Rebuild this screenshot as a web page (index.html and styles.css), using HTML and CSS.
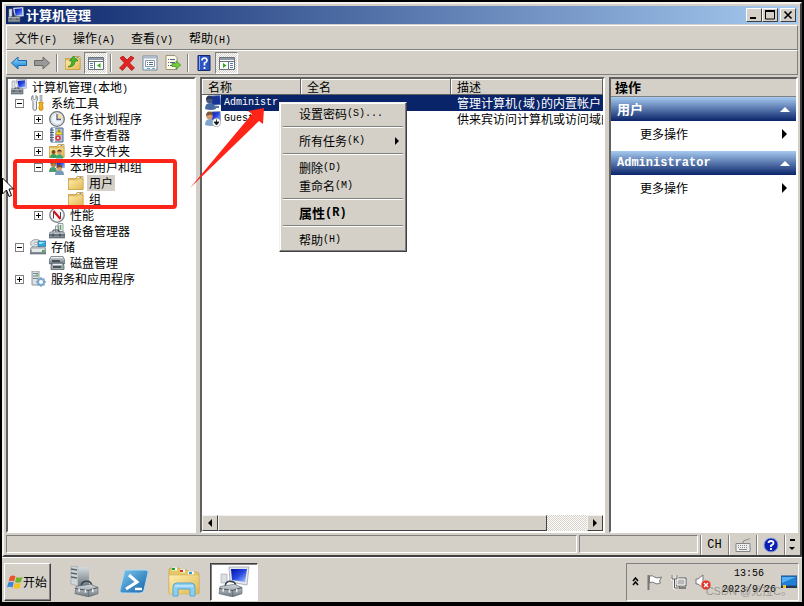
FILE: index.html
```
<!DOCTYPE html>
<html lang="zh-CN">
<head>
    <meta charset="UTF-8">
    <meta name="viewport" content="width=device-width, initial-scale=1.0">
    <title>计算机管理</title>
    <link rel="stylesheet" href="styles.css">
</head>
<body>

    <!-- Shared icons -->
    <svg class="icon-defs" aria-hidden="true">
        <defs>
            <linearGradient id="g-metal" x1="0" y1="0" x2="0" y2="1"><stop offset="0" stop-color="#d5dadd"/><stop offset="1" stop-color="#6d7880"/></linearGradient>
            <linearGradient id="g-screen" x1="0" y1="0" x2="1" y2="1"><stop offset="0" stop-color="#0010a8"/><stop offset=".5" stop-color="#2848e0"/><stop offset="1" stop-color="#a8c8ff"/></linearGradient>
            <linearGradient id="g-folder" x1="0" y1="0" x2="1" y2="1"><stop offset="0" stop-color="#fdeeb0"/><stop offset="1" stop-color="#e3b84e"/></linearGradient>
            <linearGradient id="g-blue" x1="0" y1="0" x2="0" y2="1"><stop offset="0" stop-color="#8fd8ff"/><stop offset="1" stop-color="#1880d0"/></linearGradient>
            <linearGradient id="g-ps" x1="0" y1="0" x2="1" y2="1"><stop offset="0" stop-color="#7cc8ee"/><stop offset="1" stop-color="#1260a8"/></linearGradient>
        </defs>
        <symbol id="i-computer" viewBox="0 0 16 16">
            <path d="M5 1l10-1 1 9-9 1z" fill="#e8ecf0" stroke="#889" stroke-width=".6"/>
            <path d="M6.500 2l7.500-.7.7 6.700-7 .8z" fill="url(#g-screen)"/>
            <path d="M1 2h3v8H1z" fill="#dfe3e6" stroke="#8a9299" stroke-width=".6"/>
            <path d="M4 10V9h4v1" fill="none" stroke="#445"/>
            <path d="M0 10h12v5H0z" fill="url(#g-metal)" stroke="#5b656c" stroke-width=".6"/>
            <path d="M0 12h12M3 11v2M9 11v2" stroke="#39434b" stroke-width=".8"/>
        </symbol>
        <symbol id="i-tools" viewBox="0 0 16 16">
            <path d="M3 .5v3L4.500 5 6 3.500v-3C8 1.500 8 5 6.500 6.500V14a1.800 1.800 0 0 1-3.500 0V6.500C1 5 1 1.500 3 .5z" fill="#eceeef" stroke="#6b757c" stroke-width=".9"/>
            <path d="M10 0h2v6h-2z" fill="#c5ccd1" stroke="#737d84" stroke-width=".5"/>
            <path d="M9 7h4v1.500L12.500 10l.5 2v2.500q-2 2-4 0V12l.5-2L9 8.500z" fill="#f5b20f" stroke="#a86f00" stroke-width=".6"/>
        </symbol>
        <symbol id="i-clock" viewBox="0 0 16 16">
            <circle cx="8" cy="8" r="7.300" fill="#e9eef2" stroke="#6e7478" stroke-width="1.300"/>
            <circle cx="8" cy="8" r="5.500" fill="#f3f7fd" stroke="#b4bcc4" stroke-width=".5"/>
            <path d="M8 8h5.500A5.500 5.500 0 0 0 8 2.500z" fill="#f6dca6"/>
            <path d="M8 3v5.500h4" fill="none" stroke="#506080" stroke-width="1.300"/>
        </symbol>
        <symbol id="i-events" viewBox="0 0 16 16">
            <path d="M2 1h12v14H2z" fill="#a7c3e6" stroke="#4d6b93"/>
            <path d="M4 1h2v14H4z" fill="#fff"/>
            <path d="M1 3h4M1 5.500h4M1 8h4M1 10.500h4M1 13h4" stroke="#4b5560" stroke-width=".9"/>
            <path d="M10 1.500l3.500 6h-7z" fill="#ffdb2b" stroke="#a67c00" stroke-width=".5"/>
            <path d="M10 3.500v2" stroke="#333"/>
            <circle cx="9" cy="11" r="2.800" fill="#e2373a"/>
            <path d="M8 10l2 2m0-2l-2 2" stroke="#fff" stroke-width=".8"/>
        </symbol>
        <symbol id="i-folder" viewBox="0 0 16 16">
            <path d="M.5 3.500H8l1-2h6V14.500H.5z" fill="#e9c76a" stroke="#bb8e2f" stroke-width=".7"/>
            <path d="M9.500 2.500h5" stroke="#fff"/><path d="M11.500 2.500h2" stroke="#4d8fd8"/>
            <path d="M.5 5H9l1-1h5v10.500H.5z" fill="url(#g-folder)" stroke="#c69a3c" stroke-width=".5"/>
        </symbol>
        <symbol id="i-shared" viewBox="0 0 16 16">
            <use href="#i-folder"/>
            <path d="M1 15q0-4 3.500-4T8 15z" fill="#38a060"/><circle cx="4.500" cy="9" r="2" fill="#7b4a28"/>
            <path d="M7 15.500q0-4 3.500-4t3.500 4z" fill="#3aa77b"/><circle cx="10.500" cy="9" r="2.200" fill="#d09763"/><path d="M8.300 9q0-2.500 2.200-2.500T12.700 9l-2-1z" fill="#58361c"/>
        </symbol>
        <symbol id="i-users" viewBox="0 0 16 16">
            <path d="M7 1l8-.5.8 8-8 .7z" fill="url(#g-screen)" stroke="#9aa" stroke-width=".7"/>
            <path d="M0 13q0-5 4-5t4 5z" fill="#4f9a72"/><circle cx="4.500" cy="5" r="3" fill="#b87848"/><path d="M1.500 5q0-4 3-4t3 4l-2.500-1z" fill="#56402f"/>
            <path d="M6 16q0-5 4.500-5t4.500 5z" fill="#7799b8"/><circle cx="10.500" cy="9" r="2.600" fill="#d8a071"/><path d="M7.800 9q0-3.500 2.700-3.500T13.200 9l-2-1z" fill="#704b2c"/>
        </symbol>
        <symbol id="i-perf" viewBox="0 0 16 16">
            <circle cx="8" cy="8" r="7.200" fill="#f8f8f8" stroke="#858a8d" stroke-width="1.500"/>
            <path d="M4.500 11.500V5M11.500 5v6" fill="none" stroke="#444"/>
            <path d="M4.500 4l7 8" stroke="#d80d1a" stroke-width="2"/>
        </symbol>
        <symbol id="i-device" viewBox="0 0 16 16">
            <path d="M6.500 3h3v6h-3zM9 .5h5v8H9z" fill="#edf0f2" stroke="#7b858c" stroke-width=".8"/><path d="M11.500 2v5" stroke="#55aa4a" stroke-width="1.500"/>
            <path d="M4 9V7h6v2" fill="none" stroke="#444d53"/>
            <path d="M1 9h14l1 6H0z" fill="url(#g-metal)" stroke="#4e5a62" stroke-width=".6"/>
            <path d="M0 12h16M4 10.500v3M11 10.500v3" stroke="#323c43"/>
        </symbol>
        <symbol id="i-storage" viewBox="0 0 16 16">
            <ellipse cx="6" cy="4.500" rx="5.500" ry="4" fill="#d9dee2" stroke="#7e898f" stroke-width=".7"/><ellipse cx="6" cy="4.500" rx="1.600" ry="1.200" fill="#fff" stroke="#777" stroke-width=".5"/>
            <path d="M8 2h8v5.500H8z" fill="#31a5dc" stroke="#2a6a90" stroke-width=".6"/><path d="M9 3h6l-4 2H9z" fill="#a5e2fb"/>
            <path d="M0 9.500L2 8h12l2 1.500V15H0z" fill="url(#g-metal)" stroke="#65717a" stroke-width=".6"/>
            <path d="M2 10h12v3H2z" fill="#e6e9eb"/><path d="M12 11h2v2h-2z" fill="#2fb830"/>
        </symbol>
        <symbol id="i-disk" viewBox="0 0 16 16">
            <path d="M2 1.500h12l1.500 3V9H.5V4.500z" fill="url(#g-metal)" stroke="#59636a" stroke-width=".7"/>
            <path d="M2 2.500h12" stroke="#eef0f1"/><path d="M3 6h8" stroke="#2e383e" stroke-width="1.500"/>
            <path d="M3 8h11l1 3v3.500H2V11z" fill="#a4adb3" stroke="#49535a" stroke-width=".7"/>
            <path d="M4 12h8" stroke="#2c3338" stroke-width="1.500"/><path d="M4 9.500h9" stroke="#eef0f1"/><path d="M12.500 12h1.500" stroke="#2fb830"/>
        </symbol>
        <symbol id="i-service" viewBox="0 0 16 16">
            <path d="M2 0h7v14H2z" fill="#dce2e6" stroke="#77848c" stroke-width=".8"/>
            <path d="M3 2.500h5M3 5h5M3 7.500h5" stroke="#77848c"/><path d="M6 4h2" stroke="#2fb830"/>
            <circle cx="11" cy="11" r="3" fill="#fff" stroke="#7ba5cb" stroke-width="2"/>
            <path d="M11 6v2m0 6v2M6 11h2m6 0h2M7.500 7.500L9 9m4 4l1.500 1.500m0-7L13 9m-4 4l-1.500 1.500" stroke="#7ba5cb" stroke-width="1.300"/>
        </symbol>
        <symbol id="i-user" viewBox="0 0 16 16">
            <path d="M6 1l9-.5.8 9-9 .7z" fill="url(#g-screen)" stroke="#8291ab" stroke-width=".8"/>
            <path d="M0 14q0-6 5-6t6 6q-5 2-11 0z" fill="#7fa5cf"/>
            <circle cx="4.500" cy="5" r="3.300" fill="#d49b6c"/><path d="M1 5q0-4.500 3.500-4.500T8 5L5.500 3.500z" fill="#7c5636"/>
        </symbol>
        <symbol id="i-admin" viewBox="0 0 16 16">
            <path d="M6 1l9-.5.8 9-9 .7z" fill="#16339a" stroke="#6077a8" stroke-width=".8"/>
            <path d="M0 14q0-6 5-6t6 6q-5 2-11 0z" fill="#4668a3"/>
            <circle cx="4.500" cy="5" r="3.300" fill="#48557c"/><path d="M1 5q0-4.500 3.500-4.500T8 5L5.500 3.500z" fill="#26365e"/>
            <path d="M9 11h5v2H9z" fill="#5c76a8"/>
        </symbol>
        <symbol id="i-guest" viewBox="0 0 16 16">
            <use href="#i-user"/>
            <circle cx="11.500" cy="11.500" r="4.200" fill="#fff" stroke="#999" stroke-width=".7"/>
            <path d="M11.500 8.500v3M9 11h5l-2.500 3z" fill="#111" stroke="#111" stroke-width=".8"/>
        </symbol>
        <symbol id="i-toolbox" viewBox="0 0 24 16">
            <path d="M7 6q0-5 5-5t5 5" fill="none" stroke="#39434b" stroke-width="1.500"/>
            <path d="M2 6l14-2 7 3v6l-9 3-13-3z" fill="url(#g-metal)" stroke="#59656d" stroke-width=".6"/>
            <path d="M1 8l13 2 9-3" fill="none" stroke="#4d585f"/><path d="M14 10v6" stroke="#59656d" stroke-width=".6"/>
            <path d="M5 8v3M11 9v3M18 8.500v3" stroke="#e9edf0" stroke-width="1.500"/>
        </symbol>
    </svg>

    <main class="window">
        <header class="titlebar">
            <svg class="icon"><use href="#i-computer"/></svg>
            <h1>计算机管理</h1>
            <div class="window-buttons">
                <button type="button" aria-label="最小化"><svg viewBox="0 0 12 10"><path d="M2 8h6" stroke="#000" stroke-width="2"/></svg></button>
                <button type="button" aria-label="最大化"><svg viewBox="0 0 12 10"><path d="M1.500 1v8h9V1M1 1h10" fill="none" stroke="#000"/><path d="M1 1h10" stroke="#000" stroke-width="2"/></svg></button>
                <button type="button" class="close" aria-label="关闭"><svg viewBox="0 0 12 10"><path d="M2.500 1.500l7 7m0-7l-7 7" stroke="#000" stroke-width="1.600"/></svg></button>
            </div>
        </header>

        <nav class="menubar">
            <button type="button">文件<span class="en">(F)</span></button>
            <button type="button">操作<span class="en">(A)</span></button>
            <button type="button">查看<span class="en">(V)</span></button>
            <button type="button">帮助<span class="en">(H)</span></button>
        </nav>

        <div class="toolbar">
            <button type="button" aria-label="后退"><svg class="icon" viewBox="0 0 16 16"><path d="M.5 8L7 2v3.500h8.500v5H7V14z" fill="url(#g-blue)" stroke="#1a68a8"/></svg></button>
            <button type="button" aria-label="前进"><svg class="icon" viewBox="0 0 16 16"><path d="M15.500 8L9 2v3.500H.5v5H9V14z" fill="#999" stroke="#696969"/></svg></button>
            <span class="divider"></span>
            <button type="button" aria-label="上一级"><svg class="icon" viewBox="0 0 16 16"><use href="#i-folder"/><path d="M3 12q4-1 4-6H4.500L8.500 1 13 6h-3q0 6-7 6z" fill="#44b82b" stroke="#28791a" stroke-width=".7"/></svg></button>
            <button type="button" class="pressed" aria-label="显示控制台树"><svg class="icon" viewBox="0 0 16 16"><path d="M.5 2.500h15v12H.5z" fill="#fff" stroke="#69727b"/><path d="M1 3h14v2H1z" fill="#8c9aab"/><path d="M1 6.500h14M6.500 7v7" stroke="#69727b"/><path d="M2 8.500h3M2 10.500h3M2 12.500h3" stroke="#4b80bd"/><path d="M12.500 8v5L9 10.500z" fill="#2ca51f"/></svg></button>
            <span class="divider"></span>
            <button type="button" aria-label="删除"><svg class="icon" viewBox="0 0 16 16"><path d="M1 3l3-2 4 4 4-4 3 2-4.500 5 5 5-3 2.500-4.500-5-4.500 5L.5 13l5-5z" fill="#e32222" stroke="#a80c0c" stroke-width=".7"/></svg></button>
            <button type="button" aria-label="属性"><svg class="icon" viewBox="0 0 16 16"><path d="M1 1h14v14H1z" fill="#f4f7fa" stroke="#76889a"/><path d="M1 2.500h14" stroke="#a8b9cc" stroke-width="2"/><path d="M3.500 5.500h9v6h-9z" fill="#fff" stroke="#8a98a8"/><path d="M5 7.500h1m1 0h4M5 9.500h1m1 0h4" stroke="#506a88"/><path d="M5 13.500h3" stroke="#18b8e8"/><path d="M10 13.500h3" stroke="#8a98a8"/></svg></button>
            <button type="button" aria-label="导出列表"><svg class="icon" viewBox="0 0 16 16"><path d="M1 .5h9l2 2v12H1z" fill="#fffbe8" stroke="#9b9478"/><path d="M3 4.500h1m1 0h5M3 7.500h1m1 0h5M3 10.500h1m1 0h4" stroke="#49658a"/><path d="M7 8.500h4V6l4.800 4-4.800 4v-2.500H7z" fill="#72ce3a" stroke="#3b8b1b" stroke-width=".7"/></svg></button>
            <span class="divider"></span>
            <button type="button" aria-label="帮助"><svg class="icon" viewBox="0 0 16 16"><path d="M2 .5h12v15H2z" fill="#2b55c0" stroke="#15296d"/><path d="M3.500 1v14" stroke="#8eaaf0"/><path d="M6 5.500Q6 3 8.500 3T11 5.500Q11 7 8.500 8v2.500M8.500 12v2" fill="none" stroke="#fff" stroke-width="1.700"/></svg></button>
            <button type="button" class="pressed" aria-label="显示操作窗格"><svg class="icon" viewBox="0 0 16 16"><path d="M.5 2.500h15v12H.5z" fill="#fff" stroke="#69727b"/><path d="M1 3h14v2H1z" fill="#8c9aab"/><path d="M1 6.500h14M9.500 7v7" stroke="#69727b"/><path d="M11 8.500h3M11 10.500h3M11 12.500h3" stroke="#4b80bd"/><path d="M4 8v5l3.500-2.500z" fill="#2ca51f"/></svg></button>
        </div>

        <div class="panes">
            <nav class="pane tree">
                <div class="row"><svg class="icon"><use href="#i-computer"/></svg><span>计算机管理<span class="en">(</span>本地<span class="en">)</span></span></div>
                <ul>
                    <li>
                        <div class="row"><button type="button" class="toggle open" aria-label="折叠"></button><svg class="icon"><use href="#i-tools"/></svg><span>系统工具</span></div>
                        <ul>
                            <li class="row"><button type="button" class="toggle" aria-label="展开"></button><svg class="icon"><use href="#i-clock"/></svg><span>任务计划程序</span></li>
                            <li class="row"><button type="button" class="toggle" aria-label="展开"></button><svg class="icon"><use href="#i-events"/></svg><span>事件查看器</span></li>
                            <li class="row"><button type="button" class="toggle" aria-label="展开"></button><svg class="icon"><use href="#i-shared"/></svg><span>共享文件夹</span></li>
                            <li>
                                <div class="row"><button type="button" class="toggle open" aria-label="折叠"></button><svg class="icon"><use href="#i-users"/></svg><span>本地用户和组</span></div>
                                <ul>
                                    <li class="row leaf"><svg class="icon"><use href="#i-folder"/></svg><span class="selected">用户</span></li>
                                    <li class="row leaf"><svg class="icon"><use href="#i-folder"/></svg><span>组</span></li>
                                </ul>
                            </li>
                            <li class="row"><button type="button" class="toggle" aria-label="展开"></button><svg class="icon"><use href="#i-perf"/></svg><span>性能</span></li>
                            <li class="row leaf"><svg class="icon"><use href="#i-device"/></svg><span>设备管理器</span></li>
                        </ul>
                    </li>
                    <li>
                        <div class="row"><button type="button" class="toggle open" aria-label="折叠"></button><svg class="icon"><use href="#i-storage"/></svg><span>存储</span></div>
                        <ul>
                            <li class="row leaf"><svg class="icon"><use href="#i-disk"/></svg><span>磁盘管理</span></li>
                        </ul>
                    </li>
                    <li class="row"><button type="button" class="toggle" aria-label="展开"></button><svg class="icon"><use href="#i-service"/></svg><span>服务和应用程序</span></li>
                </ul>
            </nav>

            <section class="pane list">
                <table>
                    <thead>
                        <tr><th class="col-name">名称</th><th class="col-full">全名</th><th>描述</th></tr>
                    </thead>
                    <tbody>
                        <tr class="active">
                            <td><div class="name"><svg class="icon"><use href="#i-admin"/></svg><span class="en">Administr...</span></div></td>
                            <td></td>
                            <td>管理计算机<span class="en">(</span>域<span class="en">)</span>的内置帐户</td>
                        </tr>
                        <tr>
                            <td><div class="name"><svg class="icon"><use href="#i-guest"/></svg><span class="en">Guest</span></div></td>
                            <td></td>
                            <td>供来宾访问计算机或访问域的内置帐户</td>
                        </tr>
                    </tbody>
                </table>
                <div class="scrollbar">
                    <button type="button" aria-label="向左滚动"><svg viewBox="0 0 8 8"><path d="M6 0v8L2 4z"/></svg></button>
                    <div class="thumb"></div>
                    <div class="track"></div>
                    <button type="button" aria-label="向右滚动"><svg viewBox="0 0 8 8"><path d="M2 0v8l4-4z"/></svg></button>
                </div>
            </section>

            <aside class="pane actions">
                <h2>操作</h2>
                <h3>用户<svg viewBox="0 0 10 5"><path d="M5 0l5 5H0z" fill="#fff"/></svg></h3>
                <button type="button" class="action">更多操作<svg viewBox="0 0 5 10"><path d="M0 0l5 5-5 5z"/></svg></button>
                <h3><span class="en">Administrator</span><svg viewBox="0 0 10 5"><path d="M5 0l5 5H0z" fill="#fff"/></svg></h3>
                <button type="button" class="action">更多操作<svg viewBox="0 0 5 10"><path d="M0 0l5 5-5 5z"/></svg></button>
            </aside>
        </div>

        <footer class="statusbar">
            <div class="status-main"></div>
            <div class="status-side"></div>
            <div class="langbar">
                <button type="button" class="en">CH</button>
                <button type="button" aria-label="键盘"><svg class="icon" viewBox="0 0 16 16"><path d="M8 6q0-3 3-3t4-2" fill="none" stroke="#8a8a8a"/><path d="M1 6.500h14v8H1z" fill="#eee" stroke="#858585"/><path d="M3 8.500h10M3 10.500h10" stroke="#888" stroke-dasharray="1 1"/><path d="M4 12.500h8" stroke="#888"/></svg></button>
                <button type="button" aria-label="帮助"><svg class="icon" viewBox="0 0 16 16"><circle cx="8" cy="8" r="7" fill="#0c1fb4" stroke="#8ea0dc"/><path d="M5.500 6Q5.500 4 8 4t2.500 2Q10.500 7.500 8 8.500V10M8 11v2" fill="none" stroke="#fff" stroke-width="1.800"/></svg></button>
                <button type="button" class="more" aria-label="选项"><svg viewBox="0 0 6 14"><path d="M1 1h5v2H1zM0 9h6l-3 3z"/></svg></button>
            </div>
        </footer>
    </main>

    <footer class="taskbar">
        <button type="button" class="start">
            <svg class="icon" viewBox="0 0 16 16"><path d="M3 2.500q3-2 5.500 0L7 7.500q-3-1.500-5.500 0z" fill="#e8562a"/><path d="M9.500 3q3 1.500 6 0L14 8q-3 1.500-6 0z" fill="#6fb52c"/><path d="M1.300 8.500q3-1.500 5.500 0l-1.300 5q-3-1.500-5.500 0z" fill="#3d85d8"/><path d="M7.800 9q3 1.500 6 0l-1.300 5q-3 1.500-6 0z" fill="#f8c01c"/></svg>开始
        </button>
        <div class="tasks">
            <button type="button" aria-label="服务器管理器">
                <svg viewBox="0 0 32 32"><path d="M3 0l7 1v19l-7-2z" fill="#cfd6da" stroke="#919ba1" stroke-width=".6"/><path d="M10 1h11v19H10z" fill="url(#g-metal)"/><path d="M3 3l6 1M3 7l6 1M3 11l6 1" stroke="#59656d" stroke-width="1.500"/><use href="#i-toolbox" x="6" y="14" width="25" height="17"/></svg>
            </button>
            <button type="button" aria-label="PowerShell">
                <svg viewBox="0 0 32 32"><path d="M8 4h20q3 0 2 3l-4 17q-1 3-4 3H4q-3 0-2-3L6 7q0-3 2-3z" fill="url(#g-ps)" stroke="#b5dcf3"/><path d="M11 9l8 7-11 7" fill="none" stroke="#fff" stroke-width="3"/><path d="M17 23h7" stroke="#fff" stroke-width="2.500"/></svg>
            </button>
            <button type="button" aria-label="资源管理器">
                <svg viewBox="0 0 32 32"><path d="M1 4q0-2 2-2h8l2 2h6l2 2h7q3 0 3 3v18H1z" fill="#e5c765" stroke="#c5a048" stroke-width=".7"/><path d="M4 3h5M12 5h5M20 7h6" stroke="#fff" stroke-width="3"/><path d="M4 3h3" stroke="#18a83a" stroke-width="2"/><path d="M12 5h3" stroke="#d93226" stroke-width="2"/><path d="M21 7h3" stroke="#269ee0" stroke-width="2"/><path d="M1 9h30v19H1z" fill="url(#g-folder)" stroke="#d1b35e" stroke-width=".6"/><path d="M5 30V21q0-4 4-4h14q4 0 4 4v9h-5v-7H10v7z" fill="#8dcff0" stroke="#59a9d5"/><path d="M7 20h18" stroke="#def6ff"/></svg>
            </button>
            <button type="button" class="current" aria-label="计算机管理">
                <svg viewBox="0 0 32 32"><path d="M11 1h20l-2 18-17-3z" fill="#e4e8ec" stroke="#929aa3" stroke-width=".7"/><path d="M13 3h16l-2 13-13-2z" fill="url(#g-screen)"/><path d="M3 8h6v9H3z" fill="#dce0e3" stroke="#9aa3aa" stroke-width=".6"/><use href="#i-toolbox" x="0" y="14" width="25" height="17"/></svg>
            </button>
        </div>
        <div class="tray">
            <button type="button" aria-label="显示隐藏的图标"><svg class="chevrons" viewBox="0 0 7 9"><path d="M1 4l2.500-3L6 4M1 8l2.500-3L6 8" fill="none" stroke="#000" stroke-width="1.500"/></svg></button>
            <svg class="icon" viewBox="0 0 16 16"><path d="M1.500 1v15" stroke="#777" stroke-width="2"/><path d="M2.500 2q3-1 5 1t7 0l-2 4 1 2q-4 2-6 0t-5 0z" fill="#fff" stroke="#777"/></svg>
            <svg class="icon" viewBox="0 0 16 16"><path d="M5 4h10v8H5z" fill="#b8b8b8" stroke="#555"/><path d="M6 5h8v6H6z" fill="none" stroke="#fff"/><path d="M8 12v2h7" fill="none" stroke="#666" stroke-width="1.500"/><path d="M1 1v4h5V1M3.500 5v9H8" fill="none" stroke="#fff" stroke-width="2.500"/><path d="M1 1v4h5V1M3.500 5v9H8" fill="none" stroke="#555"/></svg>
            <svg class="icon" viewBox="0 0 16 16"><path d="M1 5h2l5-4v13l-5-4H1z" fill="#fff" stroke="#777"/><circle cx="11" cy="11" r="4.800" fill="#de3128" stroke="#f2a29b" stroke-width=".6"/><path d="M9 9l4 4m0-4l-4 4" stroke="#fff" stroke-width="1.500"/></svg>
            <div class="clock"><time>13:56</time><time>2023/9/26</time></div>
            <button type="button" aria-label="显示桌面"><svg class="icon" viewBox="0 0 16 16"><path d="M0 2h16v10H0z" fill="#1f7fd4" stroke="#1d4e8a"/><path d="M1 3h14L1 9z" fill="#57aef0"/><path d="M0 13h16" stroke="#26384d" stroke-width="2"/><path d="M2 11h3v3H2z" fill="#f3c52b"/></svg></button>
        </div>
    </footer>

    <!-- Context menu -->
    <div class="context-menu" role="menu">
        <button type="button" role="menuitem">设置密码<span class="en">(S)...</span></button>
        <hr>
        <button type="button" role="menuitem">所有任务<span class="en">(K)</span><svg viewBox="0 0 4 8"><path d="M0 0l4 4-4 4z"/></svg></button>
        <hr>
        <button type="button" role="menuitem">删除<span class="en">(D)</span></button>
        <button type="button" role="menuitem">重命名<span class="en">(M)</span></button>
        <hr>
        <button type="button" role="menuitem" class="default">属性<span class="en">(R)</span></button>
        <hr>
        <button type="button" role="menuitem">帮助<span class="en">(H)</span></button>
    </div>

    <!-- Annotations -->
    <div class="highlight-box"></div>
    <svg class="highlight-arrow" viewBox="0 0 74 80"><path d="M0 80L62 6l-4-3 16-3-1 16-4-3z" fill="#ff2418"/></svg>
    <svg class="cursor" viewBox="0 0 12 21"><path d="M.5 1v16l4-4 2.500 6.500 2.500-1L7 12h4.500z" fill="#fff" stroke="#000"/></svg>
    <div class="watermark">CSDN @尤拉C。</div>

</body>
</html>
```
FILE: styles.css
```
* {
    box-sizing: border-box;
}
body {
    margin: 0;
    min-height: 100vh;
    padding: 2px 2px 4px;
    display: flex;
    flex-direction: column;
    position: relative;
    overflow: hidden;
    background: #000;
    color: #000;
    font-family: "Noto Sans CJK SC", sans-serif;
    font-size: 12px;
    line-height: 16px;
}
h1, h2, h3, ul {
    margin: 0;
    padding: 0;
    font-size: 13px;
}
ul {
    list-style: none;
    font-size: 12px;
}
button {
    margin: 0;
    padding: 0;
    border: 0;
    background: none;
    color: inherit;
    font: inherit;
}
svg {
    display: block;
    flex: none;
}
.icon-defs {
    position: absolute;
    width: 0;
    height: 0;
}
.icon {
    width: 16px;
    height: 16px;
}
.en {
    font-family: "Liberation Mono", monospace;
    font-size: 10px;
    line-height: 1;
}

/* Window frame */
.window {
    flex: 1;
    display: flex;
    flex-direction: column;
    padding: 2px;
    background: #d4d0c8;
    border: 2px solid;
    border-color: #f4f2ee #404040 #404040 #f4f2ee;
}
.titlebar {
    display: flex;
    align-items: center;
    gap: 2px;
    height: 18px;
    padding: 0 2px;
    background: linear-gradient(to right, #0a246a, #a6caf0);
    color: #fff;
}
.titlebar h1 {
    flex: 1;
    line-height: 18px;
}
.window-buttons {
    display: flex;
}
.window-buttons button {
    width: 16px;
    height: 14px;
    padding: 1px;
    background: #d4d0c8;
    border: 1px solid;
    border-color: #fff #404040 #404040 #fff;
}
.window-buttons .close {
    margin-left: 2px;
}
.menubar,
.toolbar {
    display: flex;
    align-items: center;
    height: 25px;
    border: 1px solid;
    border-color: #fff #808080 #808080 #fff;
}
.menubar {
    margin-top: 1px;
    padding-left: 8px;
    gap: 16px;
}
.toolbar button {
    display: flex;
    align-items: center;
    justify-content: center;
    width: 23px;
    height: 22px;
}
.toolbar .pressed,
.track {
    background: repeating-conic-gradient(#fff 0 25%, #d4d0c8 0 50%) 0 0 / 2px 2px;
}
.toolbar .pressed {
    border: 1px solid;
    border-color: #808080 #fff #fff #808080;
}
.divider {
    width: 2px;
    height: 18px;
    margin: 0 3px;
    border-left: 1px solid #808080;
    border-right: 1px solid #fff;
}

/* Panes */
.panes {
    flex: 1;
    display: flex;
    gap: 4px;
    margin: 2px 0;
}
.pane {
    background: #fff;
    border: 2px solid;
    border-color: #606060 #fff #fff #606060;
}
.tree {
    width: 190px;
    padding-left: 3px;
    white-space: nowrap;
}
.row {
    display: flex;
    align-items: center;
    height: 16px;
}
.row .icon {
    margin-right: 5px;
}
.tree ul ul {
    padding-left: 19px;
}
.leaf {
    padding-left: 19px;
}
.toggle {
    width: 9px;
    height: 9px;
    margin: 0 6px 0 4px;
    border: 1px solid #808080;
    background:
        linear-gradient(#000, #000) center / 5px 1px no-repeat,
        linear-gradient(#000, #000) center / 1px 5px no-repeat;
}
.toggle.open {
    background: linear-gradient(#000, #000) center / 5px 1px no-repeat;
}
.selected {
    margin-left: -2px;
    padding: 0 2px;
    background: #d4d0c8;
}
.list {
    flex: 1;
    min-width: 0;
    display: flex;
    flex-direction: column;
    justify-content: space-between;
}
.list table {
    width: 100%;
    table-layout: fixed;
    border-collapse: collapse;
}
.list th,
.list td {
    padding: 0 0 0 6px;
    overflow: hidden;
    white-space: nowrap;
    text-align: left;
    font-weight: normal;
}
.list th {
    height: 16px;
    line-height: 14px;
    background: #d4d0c8;
    box-shadow: inset -1px -1px #606060, inset 1px 1px #fff;
}
.list td {
    height: 16px;
    line-height: 16px;
}
.col-name {
    width: 99px;
}
.col-full {
    width: 150px;
}
.list td:first-child {
    padding-left: 3px;
}
.name {
    display: flex;
    align-items: center;
    gap: 3px;
    height: 16px;
}
.active td {
    background: #0a246a;
    color: #fff;
}
.active td:first-child {
    background: linear-gradient(to right, #fff 19px, #0a246a 19px);
}
.scrollbar {
    display: flex;
    height: 16px;
}
.scrollbar button,
.thumb {
    background: #d4d0c8;
    border: 1px solid;
    border-color: #f4f2ee #404040 #404040 #f4f2ee;
}
.scrollbar button {
    display: grid;
    place-items: center;
    width: 16px;
}
.scrollbar svg {
    width: 8px;
    height: 8px;
}
.thumb {
    flex: 89;
}
.track {
    flex: 11;
}
.actions {
    width: 189px;
}
.actions h2 {
    height: 18px;
    padding-left: 4px;
    background: #d4d0c8;
    border-bottom: 1px solid #808080;
}
.actions h3,
.action {
    display: flex;
    align-items: center;
    justify-content: space-between;
    width: 100%;
}
.actions h3 {
    height: 24px;
    padding: 0 6px;
    background: linear-gradient(#a6caf0, #0a246a);
    color: #fff;
}
.actions h3 .en,
.default .en {
    font-size: 12px;
}
.actions h3 svg {
    width: 10px;
    height: 5px;
}
.action {
    height: 30px;
    padding: 0 9px 4px 29px;
}
.action svg {
    width: 5px;
    height: 10px;
}

/* Status bar */
.statusbar {
    display: flex;
    gap: 2px;
    height: 18px;
}
.status-main,
.status-side {
    border: 1px solid;
    border-color: #808080 #fff #fff #808080;
}
.status-main {
    flex: 1;
}
.status-side {
    width: 119px;
}
.langbar {
    display: flex;
    height: 20px;
}
.langbar button {
    display: grid;
    place-items: center;
    width: 28px;
    border-left: 1px solid #808080;
    box-shadow: inset 1px 0 #fff;
}
.langbar .en {
    font-size: 12px;
}
.langbar .more {
    width: 14px;
}
.more svg {
    width: 6px;
    height: 14px;
}

/* Taskbar */
.taskbar {
    display: flex;
    align-items: center;
    height: 45px;
    padding: 3px 3px 0 2px;
    background: #d4d0c8;
    border-top: 1px solid #fff;
}
.start {
    display: flex;
    align-items: center;
    width: 47px;
    height: 38px;
    padding-left: 2px;
    border: 1px solid;
    border-color: #fff #404040 #404040 #fff;
    box-shadow: inset -1px -1px #808080;
}
.tasks {
    flex: 1;
    display: flex;
    gap: 2px;
    padding-left: 9px;
}
.tasks button {
    display: grid;
    place-items: center;
    width: 48px;
    height: 38px;
}
.tasks svg {
    width: 32px;
    height: 32px;
}
.tasks .current {
    background: #fff;
    border: 1px solid;
    border-color: #404040 #fff #fff #404040;
    box-shadow: inset 1px 1px #808080;
}
.tray {
    display: flex;
    align-items: center;
    gap: 8px;
    height: 38px;
    padding: 0 1px 0 5px;
    border: 1px solid;
    border-color: #808080 #fff #fff #808080;
}
.chevrons {
    width: 7px;
    height: 9px;
}
.clock {
    display: flex;
    flex-direction: column;
    align-items: center;
    width: 60px;
    margin-right: -6px;
    font-family: "Liberation Mono", monospace;
    font-size: 10px;
}

/* Popup menu over the list */
.context-menu {
    position: absolute;
    left: 279px;
    top: 102px;
    width: 128px;
    padding: 2px 3px;
    background: #d4d0c8;
    border: 1px solid;
    border-color: #f4f2ee #404040 #404040 #f4f2ee;
    box-shadow: inset -1px -1px #808080, inset 1px 1px #fff;
}
.context-menu button {
    display: flex;
    align-items: center;
    width: 100%;
    height: 18px;
    padding: 0 4px 0 16px;
}
.context-menu svg {
    width: 4px;
    height: 8px;
    margin-left: auto;
}
.context-menu hr {
    height: 2px;
    margin: 3px 0 4px;
    border: 0;
    border-top: 1px solid #808080;
    border-bottom: 1px solid #fff;
}
.context-menu .default {
    font-size: 13px;
    font-weight: bold;
}

/* Marks drawn over the window */
.highlight-box {
    position: absolute;
    left: 13px;
    top: 159px;
    width: 164px;
    height: 50px;
    border: 4px solid #ff2418;
    border-radius: 4px;
}
.highlight-arrow {
    position: absolute;
    left: 190px;
    top: 108px;
    width: 74px;
    height: 80px;
}
.cursor {
    position: absolute;
    left: 2px;
    top: 177px;
    width: 12px;
    height: 21px;
}
.watermark {
    position: absolute;
    right: 12px;
    bottom: 7px;
    color: rgba(110, 110, 110, 0.6);
    font-family: "Liberation Sans", "Noto Sans CJK SC", sans-serif;
    font-size: 11px;
}
```
